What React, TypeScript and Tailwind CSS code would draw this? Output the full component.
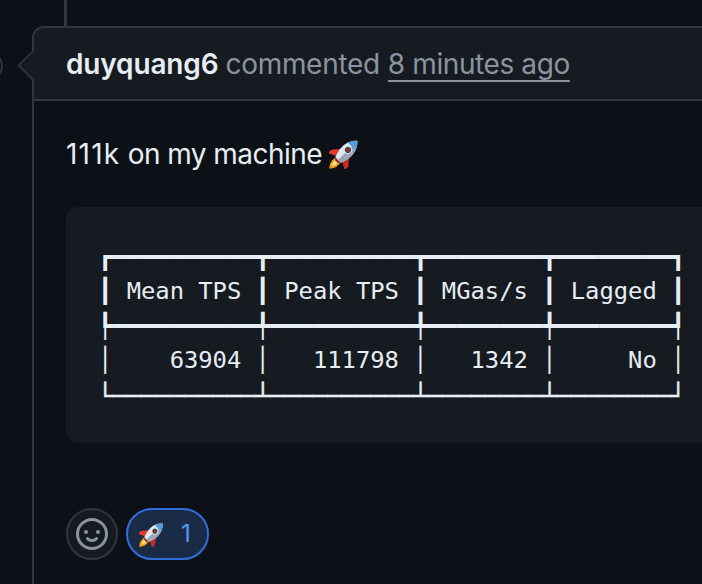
const tableRows = [
  { text: "┏━━━━━━━━━━┳━━━━━━━━━━┳━━━━━━━━┳━━━━━━━━┓", className: "leading-[36.5px]" },
  { text: "┃ Mean TPS ┃ Peak TPS ┃ MGas/s ┃ Lagged ┃", className: "leading-[30.5px]" },
  { text: "┡━━━━━━━━━━╇━━━━━━━━━━╇━━━━━━━━╇━━━━━━━━┩", className: "leading-[40.5px]" },
  { text: "│    63904 │   111798 │   1342 │     No │", className: "leading-[26.5px]" },
  { text: "└──────────┴──────────┴────────┴────────┘", className: "leading-[46.5px] [-webkit-text-stroke:0.4px_#e6edf3]" },
]

function Rocket({ className }: { className?: string }) {
  return (
    <svg viewBox="0 0 32 32" className={className}>
      <g transform="rotate(45 16 16)">
        {/* flame */}
        <path d="M16 38c-3.4-3-4.6-7-4-12h8c.6 5-.6 9-4 12z" fill="#f59e1b" />
        <path d="M16 34c-1.7-2-2.2-5-2-8h4c.2 3-.3 6-2 8z" fill="#fde68a" />
        {/* fins */}
        <path d="M10.5 13.5 3.5 22c-.6 2-.5 4 0 5.500l7.500-4z" fill="#e5392c" />
        <path d="M21.500 13.500 28.500 22c.6 2 .5 4 0 5.500l-7.500-4z" fill="#c92a22" />
        <path d="M13.500 20h5v7.500h-5z" fill="#a3241e" />
        {/* body */}
        <path d="M16-4c4.800 4 7 10 7 15.500 0 5-1.200 9.500-2.800 13.500h-8.400C10.200 21 9 16.500 9 11.500 9 6 11.200 0 16-4z" fill="#dfe7ef" />
        <path d="M16-4c4.800 4 7 10 7 15.500 0 5-1.200 9.500-2.800 13.500H16z" fill="#98a8ba" />
        <path d="M16-4c2.800 2.300 4.700 5.300 5.800 8.500H10.200C11.300 1.300 13.200-1.700 16-4z" fill="#5b9ad6" />
        {/* window */}
        <circle cx="16" cy="10" r="4.300" fill="#e8eef5" />
        <circle cx="16" cy="10" r="3.300" fill="#39404c" />
        <circle cx="16" cy="10" r="1.800" fill="#a92a26" />
      </g>
    </svg>
  )
}

export default function App() {
  return (
    <div className="h-[584px] w-[702px] overflow-hidden bg-[#0d1117] font-['Inter',sans-serif]">
      <div className="ml-[64px] h-[26px] w-[3px] bg-[#30363d]" />
      <div className="relative ml-[32px] h-[600px] w-[800px] rounded-tl-xl border-2 border-[#30363d]">
        {/* avatar edge, sits left of the comment box */}
        <div className="absolute left-[-63px] top-[22px] h-[32px] w-[32px] rounded-full border-2 border-[#30363d]" />
        {/* caret */}
        <div className="absolute left-[-12px] top-[26px] h-[23px] w-[23px] rotate-45 rounded-bl-[2px] border-b-2 border-l-2 border-[#30363d] bg-[#161b22]" />
        <div className="relative flex h-[73px] items-center rounded-tl-[10px] border-b-2 border-[#30363d] bg-[#161b22] pl-[32px] text-[28px] tracking-[-0.3px] text-[#8b949e]">
          <span className="font-semibold text-[#e6edf3] tracking-[-0.15px]">duyquang6</span>
          <span className="ml-[7px]">commented</span>
          <span className="ml-[8px] tracking-[-0.4px] underline decoration-2 underline-offset-[6px] [text-decoration-skip-ink:none]">8 minutes ago</span>
        </div>
        <div className="pl-[32px] pt-[32px]">
          <p className="flex h-[42px] items-center whitespace-pre text-[28px] tracking-[-0.55px] text-[#e6edf3]">
            <span className="tracking-[1.2px]">111k</span>
            <span> on my machine</span>
            <Rocket className="ml-[7px] h-[30px] w-[30px]" />
          </p>
          <div className="mt-[32px] h-[236px] rounded-xl bg-[#161b22] px-[32px] pt-[32px]">
            <pre className="font-['DejaVu_Sans_Mono',monospace] text-[23.8px] text-[#e6edf3]">
              {tableRows.map((row) => (
                <div key={row.text} className={row.className}>{row.text}</div>
              ))}
            </pre>
          </div>
          <div className="mt-[65px] flex items-center gap-[8px]">
            <div className="flex h-[52px] w-[52px] items-center justify-center rounded-full border-2 border-[#30363d] bg-[#161b22]">
              <svg viewBox="0 0 16 16" fill="currentColor" className="h-[32px] w-[32px] text-[#8b949e]">
                <path d="M8 0a8 8 0 1 1 0 16A8 8 0 0 1 8 0ZM1.5 8a6.5 6.5 0 1 0 13 0 6.5 6.5 0 0 0-13 0Zm3.82 1.636a.75.75 0 0 1 1.038.175l.007.009c.103.118.22.222.35.31.264.178.683.37 1.285.37.602 0 1.02-.192 1.285-.371.13-.088.247-.192.35-.31l.007-.008a.75.75 0 0 1 1.222.87l-.022-.015c.02.013.021.015.021.015v.001l-.001.002-.002.003-.005.007-.014.019a2.066 2.066 0 0 1-.184.213c-.16.166-.338.316-.53.445-.63.418-1.37.638-2.127.629-.946 0-1.652-.308-2.126-.63a3.331 3.331 0 0 1-.715-.657l-.014-.02-.005-.006-.002-.003v-.002h-.001l.613-.432-.614.43a.75.75 0 0 1 .183-1.044ZM12 7a1 1 0 1 1-2 0 1 1 0 0 1 2 0ZM5 8a1 1 0 1 1 0-2 1 1 0 0 1 0 2Zm5.25 2.250.592.416a97.710 97.710 0 0 0-.592-.416Z" />
              </svg>
            </div>
            <div className="flex h-[52px] w-[83px] items-center rounded-full border-2 border-[#2f6fdb] bg-[#1a2b47] pl-[11px] text-[24px] text-[#539bf5]">
              <Rocket className="h-[25px] w-[25px]" />
              <span className="ml-[17px]">1</span>
            </div>
          </div>
        </div>
      </div>
    </div>
  )
}
